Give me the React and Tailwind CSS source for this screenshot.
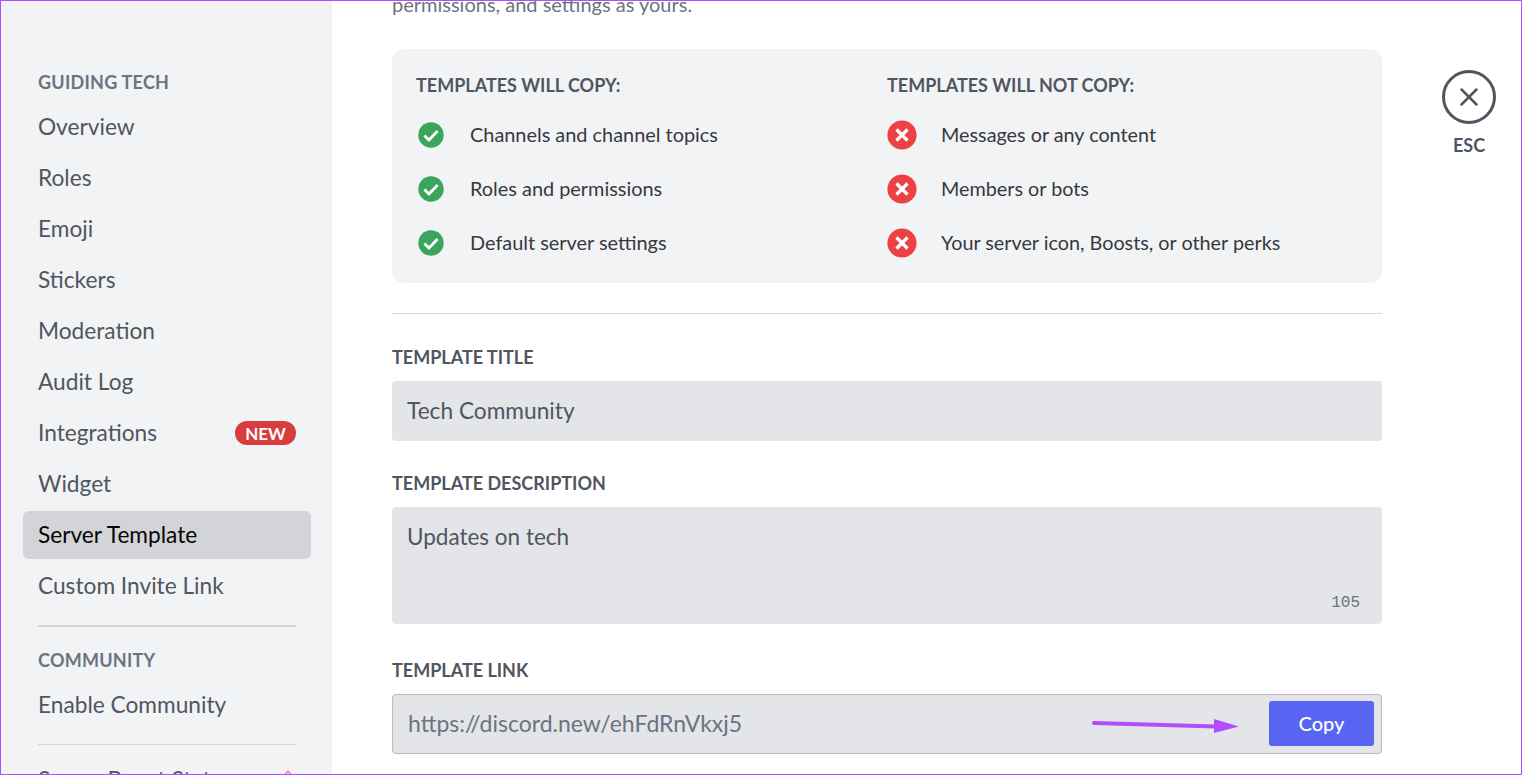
import { X } from "lucide-react";

const navTop = ["Overview", "Roles", "Emoji", "Stickers", "Moderation", "Audit Log", "Integrations", "Widget", "Server Template", "Custom Invite Link"];
const willCopy = ["Channels and channel topics", "Roles and permissions", "Default server settings"];
const wontCopy = ["Messages or any content", "Members or bots", "Your server icon, Boosts, or other perks"];

function CheckIcon() {
  return (
    <svg viewBox="0 0 26 26" className="h-[26px] w-[26px] shrink-0">
      <circle cx="13" cy="13" r="12.7" fill="#3ba55d" />
      <path d="M6.4 13.4 L11 18 L19.6 9" fill="none" stroke="#fff" strokeWidth="2.8" />
    </svg>
  );
}

function CrossIcon() {
  return (
    <svg viewBox="0 0 30 30" className="h-[30px] w-[30px] shrink-0">
      <circle cx="15" cy="15" r="14.6" fill="#ed4245" />
      <path d="M9.5 9.5 L20.5 20.5 M20.5 9.5 L9.5 20.5" fill="none" stroke="#fff" strokeWidth="3.2" />
    </svg>
  );
}

function NavItem({ label }) {
  const active = label === "Server Template";
  return (
    <div className={`flex h-12 items-center justify-between rounded-md px-[15px] text-[22.7px] ${active ? "bg-[#d2d4d8] text-[#060607]" : "text-[#4f5660]"}`}>
      <span>{label}</span>
      {label === "Integrations" && (
        <span className="flex h-[24px] w-[61px] items-center justify-center rounded-full bg-[#d83c3e] text-[17px] font-bold leading-none text-white">NEW</span>
      )}
      {label === "Server Boost Status" && (
        <svg viewBox="0 0 16 16" className="h-4 w-4 -translate-y-[2px]">
          <path d="M8 1 L14 8 L8 15 L2 8 Z" fill="none" stroke="#ff73fa" strokeWidth="1.5" />
        </svg>
      )}
    </div>
  );
}

function Label({ children, className = "" }) {
  return <div className={`text-[18px] font-bold leading-[24px] text-[#4f5660] ${className}`}>{children}</div>;
}

export default function App() {
  return (
    <div className="box-border flex h-[775px] w-full overflow-hidden border border-[#b44cff] bg-white font-['Lato','Noto_Sans',sans-serif]">
      <aside className="w-[331px] shrink-0 bg-[#f2f3f5] pl-[22px] pr-[21px] pt-[69px]">
        <div className="pl-[15px] text-[18px] font-bold leading-[24px] tracking-[0.25px] text-[#6a7480]">GUIDING TECH</div>
        <div className="mt-[9px] flex flex-col gap-[3px]">
          {navTop.map((n) => (
            <NavItem key={n} label={n} />
          ))}
        </div>
        <div className="mx-[15px] mt-[15px] h-[2px] bg-[#d4d6da]" />
        <div className="mt-[21px] pl-[15px] text-[18px] font-bold leading-[24px] tracking-[0.25px] text-[#6a7480]">COMMUNITY</div>
        <div className="mt-[9px]">
          <NavItem label="Enable Community" />
        </div>
        <div className="mx-[15px] mt-[15px] h-px bg-[#d4d6da]" />
        <div className="mt-[11px]">
          <NavItem label="Server Boost Status" />
        </div>
      </aside>

      <main className="ml-[60px] w-[990px] shrink-0">
        <p className="mt-[-10px] text-[20px] leading-[26px] text-[#6a7480]">permissions, and settings as yours.</p>

        <section className="mt-[32px] grid h-[234px] grid-cols-[471px_1fr] rounded-xl bg-[#f2f3f5] pl-6 pt-6">
          <div>
            <div className="text-[18px] font-bold leading-[24px] text-[#4f5660]">TEMPLATES WILL COPY:</div>
            <div className="mt-[25px] flex flex-col gap-[28px]">
              {willCopy.map((t) => (
                <div key={t} className="flex h-[26px] items-center pl-[2px] text-[19.9px] text-[#36393f]">
                  <CheckIcon />
                  <span className="ml-[26px]">{t}</span>
                </div>
              ))}
            </div>
          </div>
          <div>
            <div className="text-[18px] font-bold leading-[24px] text-[#4f5660]">TEMPLATES WILL NOT COPY:</div>
            <div className="mt-[25px] flex flex-col gap-[28px]">
              {wontCopy.map((t) => (
                <div key={t} className="flex h-[26px] items-center text-[19.8px] text-[#36393f]">
                  <CrossIcon />
                  <span className="ml-[24px]">{t}</span>
                </div>
              ))}
            </div>
          </div>
        </section>

        <div className="mt-[30px] h-px bg-[#d4d6da]" />

        <Label className="mt-[31px]">TEMPLATE TITLE</Label>
        <div className="mt-[12px] flex h-[60px] items-center rounded-[4px] bg-[#e3e5e8] px-[15px] text-[22.7px] text-[#4f5660]">
          <span>Tech Community</span>
        </div>

        <Label className="mt-[30px]">TEMPLATE DESCRIPTION</Label>
        <div className="relative mt-[12px] h-[117px] rounded-[4px] bg-[#e3e5e8] px-[15px] pt-[14px] text-[22.5px] leading-[32px] text-[#4f5660]">
          Updates on tech
          <span className="absolute bottom-[12px] right-[22px] font-['Liberation_Mono',monospace] text-[16px] leading-[18px] text-[#6a7480]">105</span>
        </div>

        <Label className="mt-[34px]">TEMPLATE LINK</Label>
        <div className="relative mt-[12px] flex h-[60px] items-center justify-between rounded-[4px] border border-[#b9bbbe] bg-[#e3e5e8] pl-[15px] pr-[7px] text-[23px] text-[#6a7480]">
          <span className="mb-[2px]">https://discord.new/ehFdRnVkxj5</span>
          <button className="mb-[2px] flex h-[45px] w-[105px] items-center justify-center rounded-[3px] bg-[#5865f2] text-[20px] font-medium text-white">Copy</button>
          <svg viewBox="0 0 150 20" className="absolute left-[698px] top-[20px] h-5 w-[150px]">
            <path d="M3 8 L125 11.5" fill="none" stroke="#b44cff" strokeWidth="4" strokeLinecap="round" />
            <path d="M123 4 L148 11.5 L123 18 Z" fill="#b44cff" />
          </svg>
        </div>
      </main>

      <div className="ml-[60px] flex w-[54px] shrink-0 flex-col items-center pt-[69px]">
        <div className="flex h-[54px] w-[54px] items-center justify-center rounded-full border-[3px] border-[#4f5660]">
          <X className="h-[30px] w-[30px] text-[#4f5660]" strokeWidth={2} />
        </div>
        <div className="mt-[9px] text-[18px] font-bold leading-[24px] text-[#4f5660]">ESC</div>
      </div>
    </div>
  );
}
